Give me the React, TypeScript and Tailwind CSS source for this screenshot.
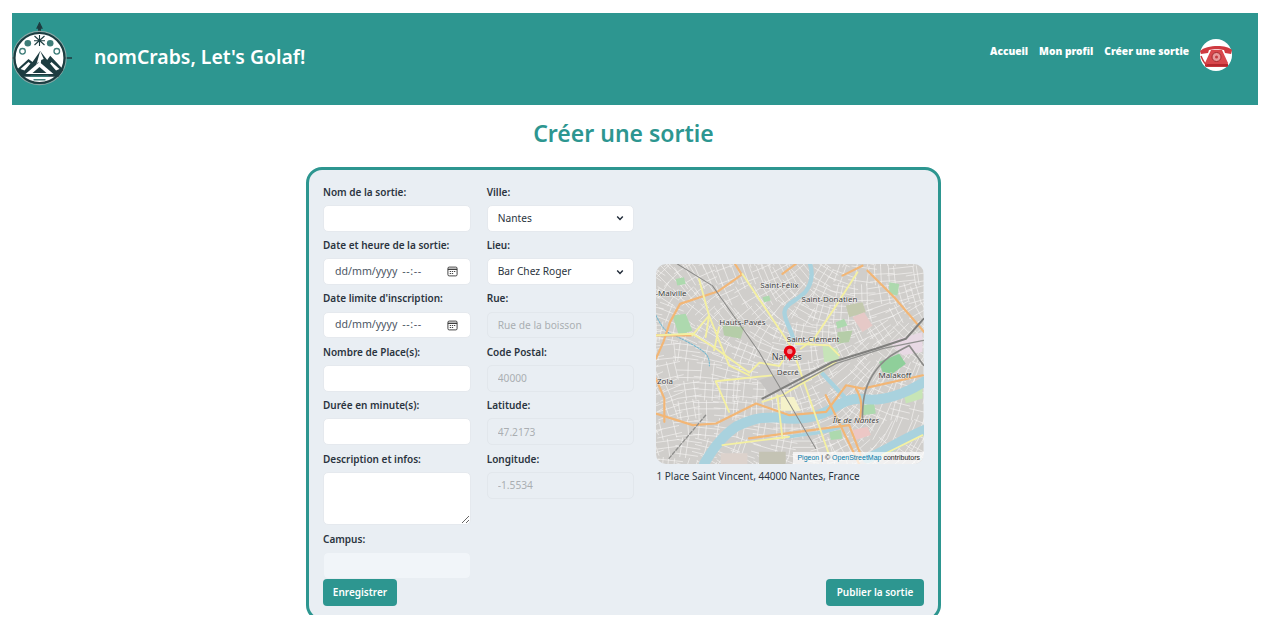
import React from "react";

const font = { fontFamily: '"Noto Sans", "Open Sans", sans-serif' };

// seeded street texture for the map
function rng(seed: number) {
  let s = seed;
  return () => {
    s = (s * 16807) % 2147483647;
    return s / 2147483647;
  };
}

function buildStreets() {
  const r = rng(4711);
  const out: string[] = [];
  for (let cx = 0; cx < 860; cx += 58) {
    for (let cy = 0; cy < 660; cy += 58) {
      // angle drifts slowly so neighbouring blocks line up
      const a = Math.sin(cx / 170) * 0.7 + Math.cos(cy / 140) * 0.6 + (r() - 0.5) * 0.12;
      const ca = Math.cos(a);
      const sa = Math.sin(a);
      for (const off of [-22, -3, 19]) {
        const j = (r() - 0.5) * 10;
        if (r() > 0.12) {
          const x1 = cx - off * sa + j;
          const y1 = cy + off * ca;
          out.push(`M${(x1 - ca * 38).toFixed(0)} ${(y1 - sa * 38).toFixed(0)}L${(x1 + ca * 38).toFixed(0)} ${(y1 + sa * 38).toFixed(0)}`);
        }
        if (r() > 0.3) {
          const x2 = cx + off * ca + j;
          const y2 = cy + off * sa;
          out.push(`M${(x2 + sa * 30).toFixed(0)} ${(y2 - ca * 30).toFixed(0)}L${(x2 - sa * 30).toFixed(0)} ${(y2 + ca * 30).toFixed(0)}`);
        }
      }
    }
  }
  return out.join("");
}

const streets = buildStreets();

function MapDrawing() {
  return (
    <svg viewBox="21 25 802 602" className="block w-full h-full" preserveAspectRatio="none">
      <rect x="21" y="25" width="802" height="602" fill="#d0cecb" />
      <path d={streets} stroke="#f4f3f1" strokeWidth="2" fill="none" />

      {/* parks and blocks */}
      <g fill="#add9ae">
        <path d="M70 180l40-5 20 50-40 15z" />
        <path d="M220 210l65 5-10 35-50-10z" fill="#b5cda8" />
        <path d="M565 230l45-5-10 35-35 5z" fill="#b5cda8" />
        <path d="M590 150l50-10 10 30-50 15z" fill="#c3c9ae" />
        <path d="M720 80l30 5-5 35-25-5z" />
        <path d="M690 320l60-25 20 30-40 30-30-5z" fill="#8fcf9a" />
        <path d="M520 270l45 10 5 35-45 5z" fill="#c6e4b8" />
        <path d="M80 70l25-5 5 20-25 5z" />
        <path d="M640 450l35-5 5 30-40 5z" />
        <path d="M540 530l35-5 5 25-35 5z" />
        <path d="M560 200l25-10 10 20-30 10z" />
        <path d="M760 400l60-20v50l-50 15z" fill="#c7e5b6" />
        <path d="M340 125l20-5 5 15-20 5z" />
      </g>
      <path d="M610 185l35-15 25 40-30 20z" fill="#e6c9c7" />
      <path d="M610 525l45-10 10 25-45 15z" fill="#ecc7c5" />
      <path d="M720 260l100-30v60l-60 10z" fill="#e8d9e4" />
      <path d="M395 425h40l20 42-60 0z" fill="#f5f2c9" />
      <path d="M330 590h80v37h-80z" fill="#c4c3b4" />
      <path d="M215 595h80v32h-80z" fill="#dcd2cc" />
      <path d="M330 375l70-25 30 40-70 25z" fill="#c6c4c2" />

      {/* rivers */}
      <g fill="none" stroke="#a9d2de" strokeLinejoin="round" strokeLinecap="round">
        <path d="M483 25c10 35 5 60-15 85-25 25-60 35-62 60 0 25 20 50 28 85" strokeWidth="13" />
        <path d="M21 180c15 30 30 55 60 62 30 15 60 30 80 45 20 15 20 30 20 45" strokeWidth="3" stroke="#70b6cf" strokeDasharray="6 4" />
        <path d="M165 627c25-45 55-85 95-112 40-20 70-30 125-28 60 8 115 5 170-30 30-20 55-30 85-26 60 10 130-15 190-55" strokeWidth="30" />
        <path d="M420 545c70-10 130-15 165-35" strokeWidth="10" />
        <path d="M655 610c50-20 110-60 170-85" strokeWidth="30" />
        <path d="M520 355l70 75" strokeWidth="13" />
      </g>

      {/* main roads */}
      <g fill="none" stroke="#f2b676" strokeWidth="6.500" strokeLinejoin="round" strokeLinecap="round">
        <path d="M258 25l20 32-70 50-115 38-30 55-20 60-22 50" />
        <path d="M21 240h105" />
        <path d="M21 475l110 35 70-5 120-60 100 35 110-10 60-80 50 10 180-40" />
        <path d="M655 45l80 80 90 105" />
        <path d="M400 55l40-30" />
        <path d="M300 550l300-40 35 90" />
        <path d="M530 420l100 207" />
        <path d="M620 400c20 30 20 60 10 100" />
        <path d="M21 370l25 60v70" />
        <path d="M580 60l60-30" />
      </g>

      {/* secondary roads */}
      <g fill="none" stroke="#f4f0a2" strokeWidth="5.500" strokeLinejoin="round" strokeLinecap="round">
        <path d="M280 55l150 225 110 320" />
        <path d="M625 50l-70 110-60 90-40 30" />
        <path d="M150 70l30 110 60 150 60 30" />
        <path d="M21 240l110-5 70 45 100 72 30-30 60 10 30-50" />
        <path d="M200 378l170-18M200 378l40 92" />
        <path d="M130 240l50-60-10 65M210 215l-15 70" />
        <path d="M385 420l15 130M340 440l60-20 100-60 60-40" />
        <path d="M440 265l100 5 30 30" />
        <path d="M220 570l200-25" />
        <path d="M700 600l120-60" />
      </g>

      {/* railways */}
      <g fill="none" strokeLinecap="round" strokeLinejoin="round">
        <path d="M85 25l105 65 140 200 170 290" stroke="#8a8a88" strokeWidth="3" />
        <path d="M340 430l210-110 130-40 90-30 53-60" stroke="#7f7f7d" strokeWidth="6" />
        <path d="M420 400l140-75 140-45 123-25" stroke="#929290" strokeWidth="4" />
        <path d="M640 490c0-50 5-90 30-130 30-50 70-70 110-90l43 60" stroke="#8b8b89" strokeWidth="5" />
        <path d="M60 610l110-130" stroke="#8f8f8d" strokeWidth="4" strokeDasharray="10 6" />
      </g>

      {/* place names */}
      <g fontSize="24" fill="#3e3e3e" textAnchor="middle" stroke="#ffffff" strokeWidth="3" paintOrder="stroke" strokeOpacity="0.65" style={font}>
        <text x="391" y="98">Saint-Félix</text>
        <text x="541" y="140">Saint-Donatien</text>
        <text x="66" y="121">-Malville</text>
        <text x="280" y="208">Hauts-Pavés</text>
        <text x="492" y="261">Saint-Clément</text>
        <text x="413" y="313" fontSize="27">Nantes</text>
        <text x="416" y="360">Decré</text>
        <text x="737" y="368">Malakoff</text>
        <text x="48" y="387">Zola</text>
        <text x="620" y="505" fontStyle="italic">Île de Nantes</text>
      </g>

      {/* pin */}
      <path d="M422 316c-3-9-18-18-18-28a18 18 0 0 1 36 0c0 10-15 19-18 28z" fill="#e8000f" />
      <circle cx="422" cy="288" r="8" fill="#ef8a90" />
    </svg>
  );
}

function Logo() {
  return (
    <svg viewBox="0 0 60 66" className="w-[60px] h-[66px] shrink-0">
      <path d="M27.500 1l-2.400 5h1.600v14h1.600V6H29.900zM0 36h7M52 36h8" stroke="#1d3c40" strokeWidth="1.300" fill="#1d3c40" />
      <circle cx="27.500" cy="36" r="26.600" fill="none" stroke="#8aa5a4" strokeWidth="1.200" />
      <circle cx="27.500" cy="36" r="25" fill="#ffffff" stroke="#1d3c40" strokeWidth="2.200" />
      <path d="M22.500 14l10 9M32.500 14l-10 9M22 18.700h11M27.500 13v11" stroke="#1d3c40" strokeWidth="1.100" fill="none" />
      <circle cx="15.800" cy="21.300" r="3.300" fill="#3d7c78" />
      <circle cx="38.200" cy="21.300" r="3.300" fill="#3d7c78" />
      <circle cx="10.500" cy="29.300" r="2.800" fill="none" stroke="#3d7c78" strokeWidth="1.300" />
      <circle cx="44.800" cy="29.300" r="2.800" fill="none" stroke="#3d7c78" strokeWidth="1.300" />
      <path d="M4.500 48l12-11 4 3 7.700-11 7 9 3-4.300 13.300 14-5 7h-37z" fill="#1d3c40" />
      <path d="M28.200 29l3.500 8-2.500 1-.7 5-2.500-3-2 4z" fill="#ffffff" />
      <path d="M8.500 47l8-7 2 1.500-6 7zM47.500 47l-8-7-1.500 1.500 6 7z" fill="#ffffff" />
      <path d="M13.500 52l14-12 14 12z" fill="#ffffff" />
      <path d="M20.500 51l7-6 7 6z" fill="#1d3c40" />
      <path d="M18.500 53.500h18v1.600h-18zM21.500 57h12v1.600h-12z" fill="#3d7c78" />
    </svg>
  );
}

function Avatar() {
  return (
    <svg viewBox="0 0 32 32" className="w-8 h-8 shrink-0">
      <circle cx="16" cy="16" r="16" fill="#ffffff" />
      <path d="M0 12c6-6 26-7 32-1l-1 4-6-1-1-3c-4-1-11-1-15 0l-1 3-7 1z" fill="#cf3a40" />
      <path d="M11 11h11l6 13-1 4H6l-1-4z" fill="#d8474c" />
      <circle cx="16.500" cy="18" r="4.500" fill="#e9999b" stroke="#a32a2f" strokeWidth="1" />
      <circle cx="16.500" cy="18" r="1.500" fill="#c23a3f" />
      <path d="M5 25h23v2.500H5z" fill="#b5282e" />
      <path d="M1 17c2 5 4 8 6 9" fill="none" stroke="#c8353a" strokeWidth="1.500" />
    </svg>
  );
}

function Chevron() {
  return (
    <svg viewBox="0 0 10 10" className="absolute right-[10px] top-[9.500px] w-[8px] h-[8px] pointer-events-none">
      <path d="M1.500 3.200L5 6.800l3.500-3.600" fill="none" stroke="#1f2937" strokeWidth="1.800" />
    </svg>
  );
}

function CalendarIcon() {
  return (
    <svg viewBox="0 0 12 12" className="w-[11px] h-[11px]">
      <rect x="1" y="1.200" width="10" height="9.600" rx="1.400" fill="none" stroke="#333" strokeWidth="1" />
      <path d="M1 3.600h10" stroke="#333" strokeWidth="1.400" />
      <path d="M3 6h1.400M5.300 6h1.400M7.600 6H9M3 8.200h1.400M5.300 8.200h1.400" stroke="#333" strokeWidth="1" />
    </svg>
  );
}

const labelCls = "flex items-center h-[26.7px] text-[10px] font-semibold text-[#2b3440] leading-none";
const inputCls = "block w-full h-[26.7px] rounded-[5px] bg-white border border-[#e5e9ee] px-[10px] text-[10.2px] text-[#2b3440] outline-none";
const disabledCls = "block w-full h-[26.7px] rounded-[5px] bg-[#e9eef3] border border-[#e2e7ec] px-[10px] text-[10.2px] text-[#aaaeb2] outline-none";

function TextField({ label }: { label: string }) {
  return (
    <div>
      <label className={labelCls}>{label}</label>
      <input type="text" className={inputCls} style={font} />
    </div>
  );
}

function DateField({ label }: { label: string }) {
  return (
    <div>
      <label className={labelCls}>{label}</label>
      <div className="flex items-center justify-between h-[26.7px] rounded-[5px] bg-white border border-[#e5e9ee] pl-[11px] pr-[12px] text-[10.6px] text-[#4b5563]">
        <span>
          dd/mm/yyyy<span className="ml-[5px] tracking-[0.6px]">--:--</span>
        </span>
        <CalendarIcon />
      </div>
    </div>
  );
}

function SelectField({ label, value }: { label: string; value: string }) {
  return (
    <div>
      <label className={labelCls}>{label}</label>
      <div className="relative">
        <select defaultValue={value} className={inputCls + " appearance-none"} style={font}>
          <option>{value}</option>
        </select>
        <Chevron />
      </div>
    </div>
  );
}

function ReadOnlyField({ label, value }: { label: string; value: string }) {
  return (
    <div>
      <label className={labelCls}>{label}</label>
      <input type="text" disabled defaultValue={value} className={disabledCls} style={font} />
    </div>
  );
}

export default function App() {
  return (
    <div className="h-[615px] overflow-hidden bg-white pt-[13px]" style={font}>
      <header className="ml-3 w-[1246px] h-[92px] bg-[#2d9690] flex items-center justify-between">
        <div className="flex items-center">
          <div className="mt-[-8px]">
            <Logo />
          </div>
          <span className="ml-[22px] mb-[4px] text-[19.4px] font-semibold text-white">nomCrabs, Let's Golaf!</span>
        </div>
        <nav className="flex items-center mr-[26px] mb-[8px] text-[10.2px] font-black text-white">
          <a className="mr-[11px] mb-[6px]">Accueil</a>
          <a className="mr-[11px] mb-[6px]">Mon profil</a>
          <a className="mr-[11px] mb-[6px]">Créer une sortie</a>
          <Avatar />
        </nav>
      </header>

      <main className="w-[1247px] flex flex-col items-center">
        <h1 className="mt-[11px] h-[35px] leading-[35px] text-[23px] font-semibold text-[#2d9690]">Créer une sortie</h1>
        <form className="mt-[16px] w-[635px] h-[454px] shrink-0 rounded-[16px] border-[3px] border-[#2d9690] bg-[#e9eef3] px-[14px] pt-[8.3px]">
          <div className="flex">
            <div className="w-[148px]">
              <TextField label="Nom de la sortie:" />
              <DateField label="Date et heure de la sortie:" />
              <DateField label="Date limite d'inscription:" />
              <TextField label="Nombre de Place(s):" />
              <TextField label="Durée en minute(s):" />
              <div>
                <label className={labelCls}>Description et infos:</label>
                <textarea className="block w-full h-[53.3px] rounded-[5px] bg-white border border-[#e5e9ee] outline-none" />
              </div>
              <div>
                <label className={labelCls}>Campus:</label>
                <input type="text" disabled className="block w-full h-[26.7px] rounded-[5px] bg-[#f1f5f9] border border-[#e9eef3]" />
              </div>
            </div>

            <div className="w-[148px] ml-[16px]">
              <SelectField label="Ville:" value="Nantes" />
              <SelectField label="Lieu:" value="Bar Chez Roger" />
              <ReadOnlyField label="Rue:" value="Rue de la boisson" />
              <ReadOnlyField label="Code Postal:" value="40000" />
              <ReadOnlyField label="Latitude:" value="47.2173" />
              <ReadOnlyField label="Longitude:" value="-1.5534" />
            </div>

            <div className="w-[268px] ml-[22px] pt-[85.7px]">
              <div className="relative h-[200px] rounded-[10px] overflow-hidden">
                <MapDrawing />
                <div className="absolute right-0 bottom-0 h-[12px] px-[4px] bg-white/70 text-[7px] leading-[12px] text-[#222]" style={{ fontFamily: '"Liberation Sans", sans-serif' }}>
                  <span className="text-[#0078a8]">Pigeon</span> | © <span className="text-[#0078a8]">OpenStreetMap</span> contributors
                </div>
              </div>
              <p className="mt-[6px] text-[10px] leading-[13px] text-[#2b3440]">1 Place Saint Vincent, 44000 Nantes, France</p>
            </div>
          </div>

          <div className="flex justify-between">
            <button type="button" className="w-[74px] h-[27px] rounded-[4px] bg-[#2d9690] text-[10px] font-semibold text-white">Enregistrer</button>
            <button type="button" className="w-[98px] h-[27px] rounded-[4px] bg-[#2d9690] text-[10px] font-semibold text-white">Publier la sortie</button>
          </div>
        </form>
      </main>
    </div>
  );
}
